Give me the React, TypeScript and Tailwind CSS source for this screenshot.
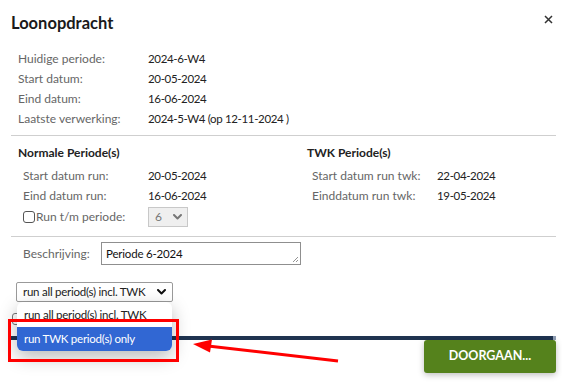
import React from "react";

const Val = ({ children }: { children: React.ReactNode }) => (
  <div className="text-[11.5px] tracking-[-0.35px] text-[#222]">{children}</div>
);

const Row = ({ label, value, indent = false }: { label: string; value: string; indent?: boolean }) => (
  <div className="flex h-[20px] items-center">
    <div className={`${indent ? "pl-[23px]" : "pl-[18px]"} w-[148px] text-[#666]`}>{label}</div>
    <Val>{value}</Val>
  </div>
);

const Chevron = ({ className = "" }: { className?: string }) => (
  <svg width="9" height="6" viewBox="0 0 9 6" className={className}>
    <path d="M1 1 L4.5 4.5 L8 1" fill="none" stroke="currentColor" strokeWidth="2" strokeLinecap="round" strokeLinejoin="round" />
  </svg>
);

export default function App() {
  return (
    <div
      className="relative w-[562px] h-[382px] overflow-hidden bg-white text-[12px] text-[#222]"
      style={{ fontFamily: "Lato, 'Open Sans', sans-serif" }}
    >
      {/* header */}
      <div className="flex items-start justify-between pl-[11px] pr-[9px] pt-[13px]">
        <div className="text-[16.5px] font-bold leading-[20px] text-[#1a1a1a]">Loonopdracht</div>
        <svg width="9" height="9" viewBox="0 0 9 9" className="mt-[2px] text-[#333]">
          <path d="M1 1 L8 8 M8 1 L1 8" stroke="currentColor" strokeWidth="1.5" />
        </svg>
      </div>

      {/* info */}
      <div className="mt-[16px]">
        <Row label="Huidige periode:" value="2024-6-W4" />
        <Row label="Start datum:" value="20-05-2024" />
        <Row label="Eind datum:" value="16-06-2024" />
        <Row label="Laatste verwerking:" value="2024-5-W4 (op 12-11-2024 )" />
      </div>

      <div className="mx-[11px] mr-[6px] mt-[6px] border-t border-[#cfcfcf]" />

      {/* periods */}
      <div className="flex">
        <div className="w-[288px]">
          <div className="flex h-[18px] items-center pl-[18px] mt-[8px] font-bold">Normale Periode(s)</div>
          <div className="mt-[4px]">
            <Row label="Start datum run:" value="20-05-2024" indent />
            <Row label="Eind datum run:" value="16-06-2024" indent />
            <div className="flex h-[22px] items-center">
              <div className="flex w-[148px] items-center pl-[23px] text-[#666]">
                <span className="mr-[1px] inline-block h-[12px] w-[12px] rounded-[3px] border border-[#555] bg-white" />
                Run t/m periode:
              </div>
              <div className="flex h-[20px] w-[40px] items-center justify-between border border-[#c8c8c8] bg-[#efefef] pl-[6px] pr-[5px] text-[#777]">
                <span>6</span>
                <Chevron className="text-[#777]" />
              </div>
            </div>
          </div>
        </div>
        <div className="flex-1">
          <div className="flex h-[18px] items-center pl-[19px] mt-[8px] font-bold">TWK Periode(s)</div>
          <div className="mt-[4px]">
            <div className="flex h-[20px] items-center">
              <div className="w-[149px] pl-[24px] text-[#666]">Start datum run twk:</div>
              <Val>22-04-2024</Val>
            </div>
            <div className="flex h-[20px] items-center">
              <div className="w-[149px] pl-[24px] text-[#666]">Einddatum run twk:</div>
              <Val>19-05-2024</Val>
            </div>
          </div>
        </div>
      </div>

      <div className="mx-[11px] mr-[6px] mt-[8px] border-t border-[#cfcfcf]" />

      {/* beschrijving */}
      <div className="mt-[5px] flex items-center">
        <div className="w-[101px] pl-[23px] text-[#666]">Beschrijving:</div>
        <div className="relative h-[23px] w-[200px] border border-[#8f8f8f] pl-[4px] text-[11.5px] leading-[21px] tracking-[-0.2px] text-[#111]">
          Periode 6-2024
          <svg width="8" height="8" viewBox="0 0 8 8" className="absolute bottom-[1px] right-[1px] text-[#777]">
            <path d="M7 2 L2 7 M7 5 L5 7" stroke="currentColor" strokeWidth="0.8" />
          </svg>
        </div>
      </div>

      {/* select */}
      <div className="ml-[16px] mt-[17px] flex h-[20px] w-[157px] items-center justify-between whitespace-nowrap rounded-[2px] border border-[#9a9a9a] pl-[6px] pr-[6px] text-[11.5px] tracking-[-0.25px] text-[#222]">
        <span>run all period(s) incl. TWK</span>
        <Chevron className="text-[#111]" />
      </div>

      {/* checkbox row (behind popup) */}
      <div className="ml-[12px] mt-[11px] h-[12px] w-[12px] rounded-[3px] border border-[#777]" />

      {/* navy bar */}
      <div className="ml-[11px] mr-[6px] mt-[11px] flex h-[4px]">
        <div className="flex-1 bg-[#1f3350]" />
        <div className="w-[3px] bg-[#8e9db3]" />
      </div>

      {/* footer button */}
      <div className="flex justify-end pr-[6px]">
        <button className="h-[33px] w-[132px] rounded-[3px] bg-[#55821c] text-[12.5px] font-bold text-white shadow-[0_2px_6px_rgba(0,0,0,0.25)]">
          DOORGAAN...
        </button>
      </div>

      {/* dropdown popup */}
      <div className="absolute left-[17px] top-[302px] w-[155px] overflow-hidden whitespace-nowrap rounded-[6px] bg-white text-[11.5px] tracking-[-0.25px] shadow-[0_6px_18px_rgba(0,0,0,0.28)]">
        <div className="flex h-[25px] items-center pl-[7px] text-[#222]">run all period(s) incl. TWK</div>
        <div className="flex h-[24px] items-center bg-[#3167d3] pl-[7px] text-white">run TWK period(s) only</div>
      </div>

      {/* red annotation box */}
      <div className="absolute left-[8px] top-[319px] h-[43px] w-[171px] border-[3px] border-[#ff0000]" />

      {/* red arrow */}
      <svg className="absolute left-0 top-0" width="562" height="382" viewBox="0 0 562 382">
        <line x1="338" y1="361" x2="208" y2="346" stroke="#ff0000" strokeWidth="3" />
        <polygon points="193,344 212,339.5 210,352.5" fill="#ff0000" />
      </svg>
    </div>
  );
}
